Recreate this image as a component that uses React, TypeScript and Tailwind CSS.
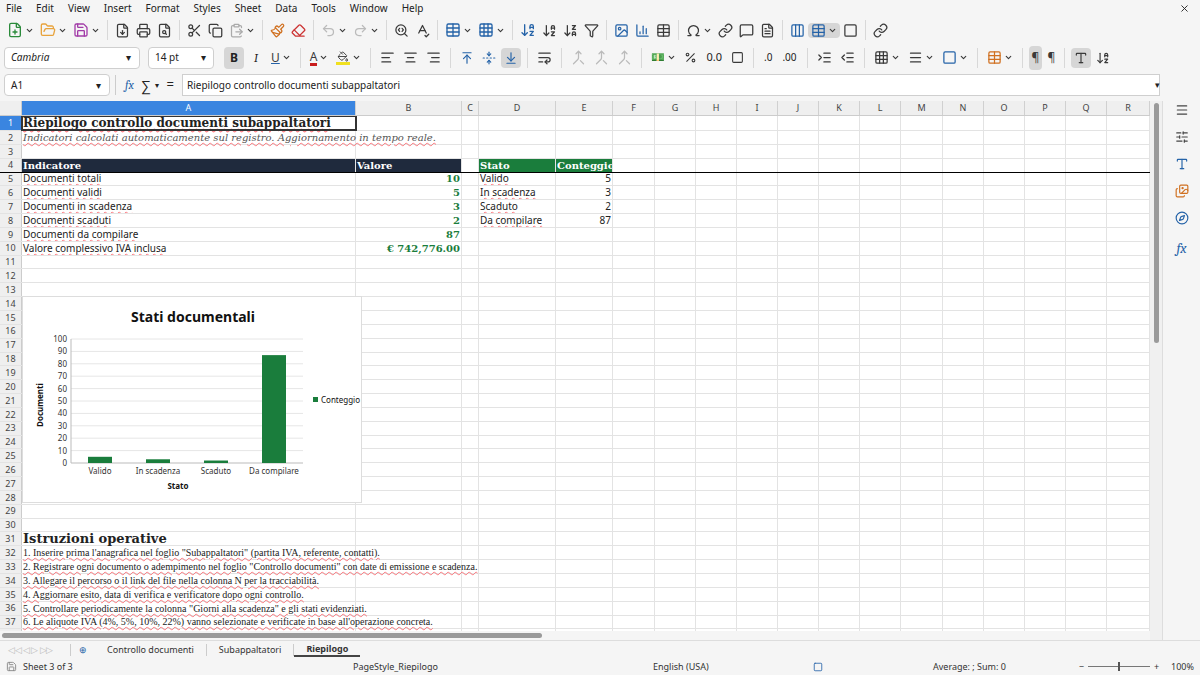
import {
  FilePlus, FolderOpen, Save, FileDown, Printer, FileSearch, Scissors, Copy, ClipboardPaste, Paintbrush, Eraser,
  Undo2, Redo2, SearchCode, SpellCheck, Table, Grid3x3, ArrowDownAZ, ArrowDownZA, Filter, Image, BarChart3,
  Omega, Link, MessageSquare, FileText, Columns3, Percent, AlignLeft, AlignCenter, AlignRight, ArrowUpToLine,
  FoldVertical, ArrowDownToLine, WrapText, Merge, ChevronDown, Menu, SlidersHorizontal, Type, Images, Compass,
  IndentIncrease, IndentDecrease, Square, PaintBucket, X,
} from "lucide-react";

const sans = { fontFamily: '"Noto Sans", "Open Sans", sans-serif' };
const serif = { fontFamily: '"DejaVu Serif", "Liberation Serif", serif' };
const tserif = { fontFamily: '"Liberation Serif", serif' };

const cols: [string, number][] = [
  ["A", 334], ["B", 106], ["C", 17], ["D", 77], ["E", 57], ["F", 42], ["G", 41], ["H", 41], ["I", 41],
  ["J", 41], ["K", 41], ["L", 41], ["M", 42], ["N", 41], ["O", 41], ["P", 41], ["Q", 41], ["R", 43],
];

function Tb({ children, drop }: { children: React.ReactNode; drop?: boolean }) {
  return (
    <div className="flex items-center gap-0.5 px-[3px] text-[#3a3a3a]">
      {children}
      {drop && <ChevronDown size={9} strokeWidth={3} />}
    </div>
  );
}
const Sep = () => <div className="w-px h-5 bg-[#d8d8d8] mx-1" />;

type Cell = { t?: string; cls?: string; style?: React.CSSProperties };

const wavy = "underline decoration-wavy decoration-red-500/60";
const rowData: Record<number, Cell[]> = {};
const dark = "bg-[#1f2a3d] text-white font-bold text-[9.5px]";
const green = "bg-[#1a7d3c] text-white font-bold text-[9.5px]";
rowData[1] = [{ t: "Riepilogo controllo documenti subappaltatori", cls: `font-bold text-[12px] ${wavy} outline-2 outline-[#333] -outline-offset-1`, style: serif }];
rowData[2] = [{ t: "Indicatori calcolati automaticamente sul registro. Aggiornamento in tempo reale.", cls: `italic text-[8px] text-[#555] ${wavy}`, style: serif }];
rowData[4] = [
  { t: "Indicatore", cls: dark, style: serif }, { t: "Valore", cls: dark, style: serif }, { t: "", cls: "" },
  { t: "Stato", cls: green, style: serif }, { t: "Conteggio", cls: green, style: serif },
];
const ind = ["Documenti totali", "Documenti validi", "Documenti in scadenza", "Documenti scaduti", "Documenti da compilare", "Valore complessivo IVA inclusa"];
const val = ["10", "5", "3", "2", "87", "€ 742,776.00"];
const st = ["Valido", "In scadenza", "Scaduto", "Da compilare"];
const cn = ["5", "3", "2", "87"];
ind.forEach((s, i) => {
  const r: Cell[] = [
    { t: s, cls: `text-[9.5px] ${wavy}` },
    { t: val[i], cls: "text-right font-bold text-[#1a7d3c] text-[10px]", style: serif },
    {},
  ];
  if (i < 4) r.push({ t: st[i], cls: `text-[9.5px] ${wavy}` }, { t: cn[i], cls: "text-right text-[9.5px]" });
  rowData[5 + i] = r;
});
rowData[31] = [{ t: "Istruzioni operative", cls: "font-bold text-[13px]", style: serif }];
[
  "1. Inserire prima l'anagrafica nel foglio \"Subappaltatori\" (partita IVA, referente, contatti).",
  "2. Registrare ogni documento o adempimento nel foglio \"Controllo documenti\" con date di emissione e scadenza.",
  "3. Allegare il percorso o il link del file nella colonna N per la tracciabilità.",
  "4. Aggiornare esito, data di verifica e verificatore dopo ogni controllo.",
  "5. Controllare periodicamente la colonna \"Giorni alla scadenza\" e gli stati evidenziati.",
  "6. Le aliquote IVA (4%, 5%, 10%, 22%) vanno selezionate e verificate in base all'operazione concreta.",
].forEach((s, i) => {
  rowData[32 + i] = [{ t: s, cls: `text-[9px] ${wavy}`, style: tserif }];
});

function Chart() {
  const bars = [["Valido", 5], ["In scadenza", 3], ["Scaduto", 2], ["Da compilare", 87]] as const;
  const x0 = 48, y0 = 166, h = 124, w = 232;
  return (
    <div className="absolute left-0 top-[180px] w-[340px] h-[207px] bg-white border border-[#ddd]" style={sans}>
      <svg width="340" height="207" className="absolute inset-0">
        {Array.from({ length: 11 }).map((_, i) => (
          <g key={i}>
            <line x1={x0} x2={x0 + w} y1={y0 - (i * h) / 10} y2={y0 - (i * h) / 10} stroke={i ? "#e6e6e6" : "#bbb"} />
            <text x={x0 - 4} y={y0 - (i * h) / 10 + 3} fontSize="8" textAnchor="end" fill="#333">{i * 10}</text>
          </g>
        ))}
        <line x1={x0} x2={x0} y1={y0 - h} y2={y0} stroke="#bbb" />
        {bars.map(([l, v], i) => {
          const cx = x0 + w / 8 + (i * w) / 4;
          const bh = (v * h) / 100;
          return (
            <g key={l}>
              <rect x={cx - 12} y={y0 - bh} width={24} height={bh} fill="#1a7d3c" />
              <text x={cx} y={y0 + 11} fontSize="8" textAnchor="middle" fill="#333">{l}</text>
            </g>
          );
        })}
        <text x="170" y="25" fontSize="14" fontWeight="bold" textAnchor="middle" fill="#111">Stati documentali</text>
        <text x="155" y="192" fontSize="8" fontWeight="bold" textAnchor="middle" fill="#111">Stato</text>
        <text x="20" y="108" fontSize="8" fontWeight="bold" textAnchor="middle" fill="#111" transform="rotate(-90 20 108)">Documenti</text>
        <rect x="290" y="100" width="5" height="5" fill="#1a7d3c" />
        <text x="298" y="106" fontSize="8" fill="#111">Conteggio</text>
      </svg>
    </div>
  );
}

export default function App() {
  const rows = Array.from({ length: 38 }, (_, i) => i + 1);
  return (
    <div className="w-[1200px] h-[675px] bg-[#f5f5f5] text-[#222] overflow-hidden flex flex-col text-[10px]" style={sans}>
      <div className="h-[17px] flex items-center gap-[14px] px-[6px] text-[10px] text-[#222]">
        {["File", "Edit", "View", "Insert", "Format", "Styles", "Sheet", "Data", "Tools", "Window", "Help"].map((m) => <span key={m}>{m}</span>)}
        <X size={11} className="ml-auto mr-1" />
      </div>
      <div className="h-[26px] flex items-center px-[4px]">
        <Tb drop><FilePlus size={16} className="text-[#2a8a3a]" /></Tb>
        <Tb drop><FolderOpen size={16} className="text-[#e8a33c]" /></Tb>
        <Tb drop><Save size={16} className="text-[#a23ca8]" /></Tb>
        <Sep />
        <Tb><FileDown size={15} /></Tb><Tb><Printer size={15} /></Tb><Tb><FileSearch size={15} /></Tb>
        <Sep />
        <Tb><Scissors size={15} /></Tb><Tb><Copy size={15} /></Tb><Tb drop><ClipboardPaste size={15} className="text-[#aaa]" /></Tb>
        <Sep />
        <Tb><Paintbrush size={15} className="text-[#d07020]" /></Tb><Tb><Eraser size={15} className="text-[#c33]" /></Tb>
        <Sep />
        <Tb drop><Undo2 size={15} className="text-[#bbb]" /></Tb><Tb drop><Redo2 size={15} className="text-[#bbb]" /></Tb>
        <Sep />
        <Tb><SearchCode size={15} /></Tb><Tb><SpellCheck size={15} /></Tb>
        <Sep />
        <Tb drop><Table size={16} className="text-[#2563a8]" /></Tb><Tb drop><Grid3x3 size={16} className="text-[#2563a8]" /></Tb>
        <Sep />
        <Tb><ArrowDownAZ size={16} className="text-[#2563a8]" /></Tb><Tb><ArrowDownAZ size={15} /></Tb><Tb><ArrowDownZA size={15} /></Tb><Tb><Filter size={15} /></Tb>
        <Sep />
        <Tb><Image size={15} className="text-[#2563a8]" /></Tb><Tb><BarChart3 size={15} className="text-[#2563a8]" /></Tb><Tb><Table size={15} /></Tb>
        <Sep />
        <Tb drop><Omega size={15} /></Tb><Tb><Link size={15} /></Tb><Tb><MessageSquare size={15} /></Tb><Tb><FileText size={15} /></Tb>
        <Sep />
        <Tb><Columns3 size={15} className="text-[#2563a8]" /></Tb>
        <div className="bg-[#d6d6d6] rounded-sm"><Tb drop><Table size={15} className="text-[#2563a8]" /></Tb></div>
        <Tb><Square size={15} /></Tb><Sep /><Tb><Link size={15} /></Tb>
      </div>
      <div className="h-[29px] flex items-center px-[4px] gap-[2px]">
        <div className="w-[136px] h-[22px] bg-white border border-[#cfcfcf] rounded-sm flex items-center pl-[6px] italic text-[10px]">
          Cambria<div className="ml-auto w-[22px] flex justify-center not-italic">▾</div>
        </div>
        <div className="w-[66px] h-[22px] ml-[6px] bg-white border border-[#cfcfcf] rounded-sm flex items-center pl-[6px] text-[10px]">
          14 pt<div className="ml-auto w-[20px] flex justify-center">▾</div>
        </div>
        <div className="w-[20px] h-[22px] ml-[8px] bg-[#d6d6d6] rounded-sm flex items-center justify-center font-bold text-[12px]">B</div>
        <div className="w-[20px] text-center italic text-[12px] font-serif">I</div>
        <Tb drop><span className="underline text-[12px] decoration-[#2563a8]">U</span></Tb>
        <Sep />
        <Tb drop><span className="text-[12px] border-b-[3px] border-[#c91e1e] leading-[13px]">A</span></Tb>
        <Tb drop><PaintBucket size={14} className="border-b-[3px] border-[#f0e020]" /></Tb>
        <Sep />
        <Tb><AlignLeft size={15} /></Tb><Tb><AlignCenter size={15} /></Tb><Tb><AlignRight size={15} /></Tb>
        <Sep />
        <Tb><ArrowUpToLine size={14} className="text-[#2563a8]" /></Tb><Tb><FoldVertical size={14} className="text-[#2563a8]" /></Tb>
        <div className="bg-[#d6d6d6] rounded-sm py-[3px]"><Tb><ArrowDownToLine size={14} className="text-[#2563a8]" /></Tb></div>
        <Sep />
        <Tb><WrapText size={15} /></Tb>
        <Sep />
        <Tb><Merge size={15} className="text-[#bbb]" /></Tb><Tb><Merge size={15} className="text-[#bbb]" /></Tb><Tb><Merge size={15} className="text-[#bbb]" /></Tb>
        <Sep />
        <Tb drop><span className="text-[11px]">💵</span></Tb><Tb><Percent size={13} /></Tb><span className="px-1 text-[11px]">0.0</span><Tb><Square size={13} /></Tb>
        <Sep />
        <span className="px-1 text-[10px]">.0</span><span className="px-1 text-[10px]">.00</span>
        <Sep />
        <Tb><IndentIncrease size={15} /></Tb><Tb><IndentDecrease size={15} /></Tb>
        <Sep />
        <Tb drop><Grid3x3 size={15} /></Tb><Tb drop><Menu size={15} /></Tb><Tb drop><Square size={15} className="text-[#2563a8]" /></Tb>
        <Sep />
        <Tb drop><Table size={15} className="text-[#d07020]" /></Tb>
        <Sep />
        <div className="bg-[#d6d6d6] rounded-sm py-[3px]"><Tb><span className="text-[12px]">¶</span></Tb></div><Tb><span className="text-[12px]">¶</span></Tb>
        <Sep />
        <div className="bg-[#d6d6d6] rounded-sm py-[3px]"><Tb><Type size={14} /></Tb></div><Tb><ArrowDownAZ size={14} /></Tb>
      </div>
      <div className="h-[26px] flex items-center pl-[4px] pr-[40px]">
        <div className="w-[106px] h-[22px] bg-white border border-[#cfcfcf] rounded-sm flex items-center pl-[6px] text-[10px]">
          A1<div className="ml-auto w-[22px] flex justify-center">▾</div>
        </div>
        <div className="w-px h-5 bg-[#ccc] mx-[5px]" />
        <span className="italic text-[#2563a8] font-serif text-[12px] px-1">fx</span>
        <span className="text-[14px] px-1">∑</span><span className="text-[8px]">▾</span>
        <span className="text-[13px] px-2">=</span>
        <div className="flex-1 h-[22px] bg-white border border-[#cfcfcf] flex items-center pl-[4px] text-[10px]">Riepilogo controllo documenti subappaltatori</div>
        <span className="absolute right-[40px] text-[9px]">▾</span>
      </div>
      <div className="flex flex-1 min-h-0 mt-[3px]">
        <div className="w-[1150px] flex flex-col bg-white">
          <div className="h-[15px] flex bg-[#efefef] text-[9px] text-[#444] border-b border-[#ccc]">
            <div className="w-[22px] shrink-0 border-r border-[#ccc]" />
            {cols.map(([c, w]) => (
              <div key={c} className={`shrink-0 flex items-center justify-center border-r border-[#d0d0d0] ${c === "A" ? "bg-[#3a85e0] text-white" : ""}`} style={{ width: w }}>{c}</div>
            ))}
          </div>
          <div className="relative flex-1 overflow-hidden">
            {rows.map((r) => {
              const data = rowData[r] || [];
              return (
                <div key={r} className={`flex ${r === 1 ? "h-[15px]" : "h-[13.85px]"} ${r === 4 ? "border-b border-black" : "border-b border-[#e3e3e3]"}`}>
                  <div className={`w-[22px] shrink-0 flex items-center justify-center text-[9px] border-r border-[#ccc] ${r === 1 ? "bg-[#3a85e0] text-white" : "bg-[#efefef] text-[#444]"}`}>{r}</div>
                  {cols.map(([c, w], ci) => {
                    const d = data[ci];
                    return (
                      <div key={c} className={`shrink-0 h-full px-[1px] flex items-center text-[10px] whitespace-nowrap border-r border-[#e3e3e3] ${d?.t && (r >= 31 || r <= 2) ? "overflow-visible z-10" : "overflow-hidden"} ${d?.cls ?? ""}`} style={{ width: w, ...(d?.style ?? {}) }}>
                        <span className={d?.cls?.includes("text-right") ? "ml-auto" : ""}>{d?.t}</span>
                      </div>
                    );
                  })}
                </div>
              );
            })}
            <div className="absolute left-[22px] top-0"><Chart /></div>
          </div>
          <div className="h-[9px] bg-[#f5f5f5] flex items-center px-[2px]">
            <div className="w-[540px] h-[5px] rounded bg-[#9a9a9a]" />
          </div>
        </div>
        <div className="w-[12px] bg-[#f0f0f0] flex justify-center pt-[2px]">
          <div className="w-[5px] h-[240px] rounded bg-[#9a9a9a]" />
        </div>
        <div className="w-[38px] border-l border-[#ddd] flex flex-col items-center gap-[13px] pt-[2px] text-[#444]">
          <Menu size={14} />
          <SlidersHorizontal size={14} />
          <Type size={14} className="italic text-[#2563a8]" />
          <Images size={14} className="text-[#d07020]" />
          <Compass size={14} className="text-[#2563a8]" />
          <span className="italic text-[#2563a8] font-serif text-[14px]">fx</span>
        </div>
      </div>
      <div className="h-[18px] flex items-center text-[9px] text-[#333] border-t border-[#ddd]">
        <div className="w-[70px] text-[#bbb] px-2 tracking-tighter">◁◁ ◁ ▷ ▷▷</div>
        <div className="w-px h-3 bg-[#ccc]" />
        <div className="px-2 text-[#2563a8]">⊕</div>
        <div className="px-3">Controllo documenti</div>
        <div className="w-px h-3 bg-[#ccc]" />
        <div className="px-3">Subappaltatori</div>
        <div className="w-px h-3 bg-[#ccc]" />
        <div className="px-3 font-bold border-b-2 border-[#444]">Riepilogo</div>
      </div>
      <div className="h-[17px] flex items-center text-[9px] text-[#333]">
        <Save size={11} className="mx-[6px] text-[#888]" />
        <span className="w-[140px]">Sheet 3 of 3</span>
        <span className="ml-[190px] w-[300px]">PageStyle_Riepilogo</span>
        <span className="w-[160px]">English (USA)</span>
        <Square size={10} className="text-[#2563a8]" />
        <span className="ml-[110px]">Average: ; Sum: 0</span>
        <span className="ml-auto flex items-center gap-1 mr-[6px]">−<span className="w-[62px] h-px bg-[#777] relative"><span className="absolute left-[30px] -top-[4px] w-[2px] h-[9px] bg-[#555]" /></span>+<span className="ml-2">100%</span></span>
      </div>
    </div>
  );
}
